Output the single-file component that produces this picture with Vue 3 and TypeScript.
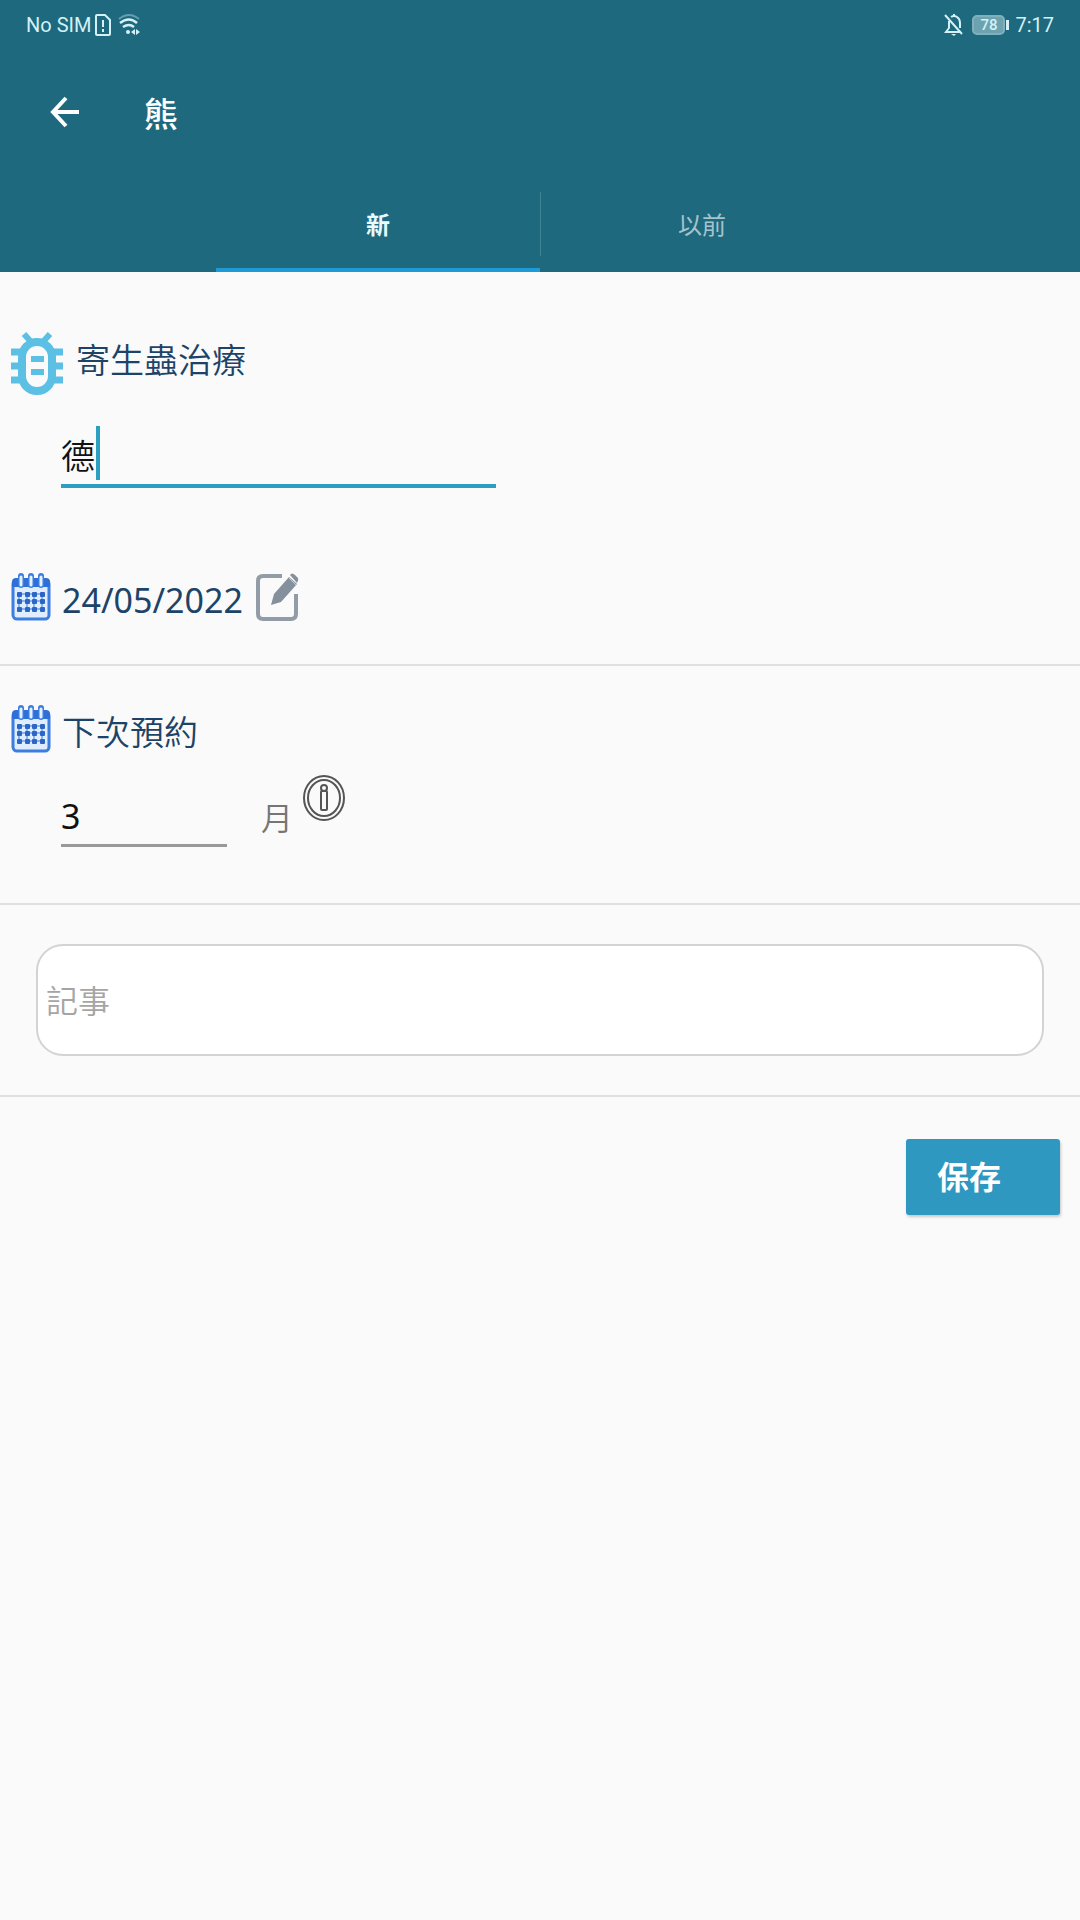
<script setup lang="ts">
import { ref } from 'vue'

const tabs = ['新', '以前']
const activeTab = ref(0)
const treatment = ref('德')
const treatmentDate = '24/05/2022'
const months = ref('3')
const note = ref('')

const gridColumns = [6, 14, 21, 29]
const gridRows = [19, 26, 34]
</script>

<template>
  <div class="screen">
    <header class="header">
      <div class="status">
        <div class="status-group">
          <span>No SIM</span>
          <svg class="sim" width="16" height="22" viewBox="0 0 16 22" fill="none" stroke="currentColor" stroke-width="2">
            <path d="M2 1h8l5 5v14q0 1-1 1H2q-1 0-1-1V2q0-1 1-1z" />
            <path d="M8 6v7M8 15v3" />
          </svg>
          <svg class="wifi" width="24" height="24" viewBox="0 0 24 24" fill="none" stroke="currentColor" stroke-width="2">
            <path d="M1 6Q11-2 21 6" opacity=".4" />
            <path d="M2 10q9-7 17 0M5 14q6-4 11 0" stroke-width="2.5" />
            <circle cx="10" cy="19" r="2" fill="currentColor" stroke="none" />
            <path d="M13 19l4-3v6zM22 19l-4-3v6z" fill="currentColor" stroke="none" />
          </svg>
        </div>
        <div class="status-group">
          <svg class="bell" width="20" height="24" viewBox="0 0 20 24" fill="none" stroke="currentColor" stroke-width="2">
            <path d="M5 8v7l-3 4h15M7 4q3-2 6 0 3 2 3 6v5M10 1v2M1 2l17 19" />
            <path d="M7 21h5l-2 2z" fill="currentColor" stroke="none" />
          </svg>
          <span class="battery"><span class="battery-level">78</span></span>
          <span>7:17</span>
        </div>
      </div>
      <div class="app-bar">
        <button class="back" type="button" aria-label="返回">
          <svg width="30" height="32" viewBox="0 0 30 32" fill="none" stroke="currentColor" stroke-width="4">
            <path d="M29 16H3M16 2L3 16l13 14" />
          </svg>
        </button>
        <h1 class="title">熊</h1>
      </div>
      <nav class="tabs">
        <button
          v-for="(tab, index) in tabs"
          :key="tab"
          type="button"
          class="tab"
          :class="{ active: activeTab === index }"
          @click="activeTab = index"
        >
          {{ tab }}
        </button>
      </nav>
    </header>

    <main>
      <section class="section">
        <div class="heading treatment-heading">
          <svg class="bug" width="52" height="64" viewBox="0 0 52 64" fill="none" stroke="#5bc0e3">
            <path d="M13 2l8 9M39 2l-8 9" stroke-width="6" />
            <path d="M0 20h52M0 34h12M40 34h12M0 48h52" stroke-width="7" />
            <rect x="11" y="10" width="30" height="49" rx="15" fill="#fafafa" stroke-width="8" />
            <path d="M20 27h13M20 40h13" stroke-width="6" />
          </svg>
          <label for="treatment">寄生蟲治療</label>
        </div>
        <div class="field treatment-field">
          <input id="treatment" v-model="treatment" type="text" autocomplete="off" />
          <span class="caret"></span>
        </div>
        <div class="heading">
          <svg class="calendar" width="40" height="48" viewBox="0 0 40 48">
            <rect x="2" y="7" width="36" height="39" rx="4" fill="#dfedff" stroke="#3c7de0" stroke-width="3" />
            <path d="M1 14V9q0-4 4-4h30q4 0 4 4v5z" fill="#2e6fd8" />
            <path d="M10 3v9M20 3v9M30 3v9" stroke="#3c7de0" stroke-width="6" stroke-linecap="round" />
            <path d="M10 4v8M20 4v8M30 4v8" stroke="#e4f2ff" stroke-width="3" stroke-linecap="round" />
            <path d="M6 21h28M6 28h28M6 36h28M8 19v20M16 19v20M23 19v20M31 19v20" stroke="#86b3f2" stroke-width="2" />
            <template v-for="y in gridRows" :key="y">
              <rect v-for="x in gridColumns" :key="x" :x="x" :y="y" width="5" height="5" rx="1" fill="#2c65c4" />
            </template>
          </svg>
          <span class="date">{{ treatmentDate }}</span>
          <button class="icon-button edit" type="button" aria-label="編輯">
            <svg width="44" height="50" viewBox="0 0 44 50" fill="none">
              <path d="M27 4H8Q3 4 3 9v33q0 5 5 5h28q5 0 5-5V22" stroke="#929ca6" stroke-width="4" />
              <path d="M16 33l3-11L34 5l8 7-16 18z" fill="#84909b" />
              <path d="M35 3q2-3 5 0l3 3q1 2-1 5z" fill="#84909b" />
              <path d="M33 5l8 8" stroke="#c5ccd2" stroke-width="1" />
            </svg>
          </button>
        </div>
      </section>

      <section class="section next">
        <div class="heading">
          <svg class="calendar" width="40" height="48" viewBox="0 0 40 48">
            <rect x="2" y="7" width="36" height="39" rx="4" fill="#dfedff" stroke="#3c7de0" stroke-width="3" />
            <path d="M1 14V9q0-4 4-4h30q4 0 4 4v5z" fill="#2e6fd8" />
            <path d="M10 3v9M20 3v9M30 3v9" stroke="#3c7de0" stroke-width="6" stroke-linecap="round" />
            <path d="M10 4v8M20 4v8M30 4v8" stroke="#e4f2ff" stroke-width="3" stroke-linecap="round" />
            <path d="M6 21h28M6 28h28M6 36h28M8 19v20M16 19v20M23 19v20M31 19v20" stroke="#86b3f2" stroke-width="2" />
            <template v-for="y in gridRows" :key="y">
              <rect v-for="x in gridColumns" :key="x" :x="x" :y="y" width="5" height="5" rx="1" fill="#2c65c4" />
            </template>
          </svg>
          <label for="months">下次預約</label>
        </div>
        <div class="months-row">
          <div class="field months-field">
            <input id="months" v-model="months" type="text" inputmode="numeric" />
          </div>
          <span class="unit">月</span>
          <button class="icon-button info" type="button" aria-label="說明">
            <svg width="42" height="48" viewBox="0 0 42 48" fill="none" stroke="#555" stroke-width="2">
              <ellipse cx="21" cy="24" rx="20" ry="22" />
              <ellipse cx="21" cy="24" rx="16" ry="18" />
              <circle cx="21" cy="14" r="3" />
              <rect x="18" y="17" width="6" height="19" rx="1" />
            </svg>
          </button>
        </div>
      </section>

      <section class="section note">
        <textarea v-model="note" rows="1" placeholder="記事" aria-label="記事"></textarea>
      </section>

      <div class="actions">
        <button class="save" type="button">保存</button>
      </div>
    </main>
  </div>
</template>

<style>
body {
  background: #fafafa;
}
</style>

<style scoped>
.screen {
  min-height: 100vh;
  background: #fafafa;
  color: #1d4468;
  font-family: "Noto Sans", "Noto Sans CJK TC", sans-serif;
  font-size: 34px;
  line-height: 48px;
}

button,
input,
textarea {
  box-sizing: border-box;
  margin: 0;
  padding: 0;
  border: 0;
  background: none;
  color: inherit;
  font: inherit;
  outline: 0;
}

svg {
  display: block;
  flex: none;
}

.header {
  background: #1e697d;
  color: #fff;
}

.status {
  display: flex;
  justify-content: space-between;
  padding: 0 26px;
  height: 50px;
  color: #d3f1f7;
  font-family: Roboto, sans-serif;
  font-size: 20px;
}

.status-group {
  display: flex;
  align-items: center;
}

.sim {
  margin-left: 4px;
}

.wifi {
  margin-left: 7px;
}

.battery {
  position: relative;
  margin: 0 10px 0 8px;
  width: 33px;
  height: 20px;
  box-sizing: border-box;
  border: 2px solid #7fb1bd;
  border-radius: 5px;
  background: #6da3b0;
}

.battery::after {
  content: "";
  position: absolute;
  top: 3px;
  right: -6px;
  width: 3px;
  height: 10px;
  background: #d3f1f7;
}

.battery-level {
  display: block;
  font-size: 15px;
  font-weight: 500;
  line-height: 16px;
  text-align: center;
}

.app-bar {
  display: flex;
  align-items: center;
  height: 124px;
}

.back {
  width: 30px;
  margin-left: 50px;
}

.title {
  margin: 0 0 0 64px;
  padding-top: 4px;
  font-size: 34px;
  font-weight: 500;
}

.tabs {
  display: flex;
  width: 60%;
  margin: 0 auto;
}

.tab {
  position: relative;
  flex: 1;
  height: 98px;
  padding-top: 8px;
  border-bottom: 4px solid transparent;
  color: #a5c3cb;
  font-size: 24px;
}

.tab.active {
  border-color: #1e9ad6;
  color: #e6fbff;
  font-weight: 700;
}

.tab + .tab::before {
  content: "";
  position: absolute;
  top: 18px;
  left: 0;
  width: 1px;
  height: 64px;
  background: #3f8294;
}

.section {
  border-bottom: 2px solid #e0e0e0;
  padding: 60px 0 40px;
}

.heading {
  display: flex;
  align-items: center;
  padding-left: 11px;
}

.calendar {
  margin-right: 11px;
}

.heading label,
.date {
  padding-top: 6px;
}

.heading label {
  font-weight: 350;
}

.treatment-heading {
  align-items: flex-start;
}

.bug {
  margin-right: 13px;
}

.treatment-heading label {
  padding-top: 4px;
}

.field {
  position: relative;
  margin-left: 61px;
}

.field input {
  display: block;
  width: 100%;
  color: #111;
}

.treatment-field {
  width: 435px;
  margin-top: 28px;
  margin-bottom: 82px;
}

.treatment-field input {
  height: 64px;
  border-bottom: 4px solid #2b9fc0;
  font-weight: 350;
}

.caret {
  position: absolute;
  top: 2px;
  left: 35px;
  width: 4px;
  height: 54px;
  background: #2b9fc0;
}

.icon-button {
  flex: none;
}

.edit {
  margin-left: 12px;
}

.next {
  padding: 36px 0 56px;
}

.months-row {
  display: flex;
  align-items: flex-start;
  margin-top: 18px;
}

.months-field {
  width: 166px;
}

.months-field input {
  height: 73px;
  padding-top: 14px;
  border-bottom: 3px solid #999;
}

.unit {
  margin-left: 34px;
  padding-top: 20px;
  color: #757575;
  font-size: 32px;
  font-weight: 350;
}

.info {
  margin-left: 10px;
}

.note {
  padding: 39px 36px;
}

.note textarea {
  display: block;
  width: 100%;
  height: 112px;
  padding: 32px 8px;
  border: 2px solid #d3d3d3;
  border-radius: 27px;
  background: #fff;
  color: #333;
  font-size: 32px;
  font-weight: 350;
  line-height: 46px;
  overflow: hidden;
  resize: none;
}

.note textarea::placeholder {
  color: #a5a5a5;
  opacity: 1;
}

.actions {
  display: flex;
  justify-content: flex-end;
  padding: 42px 20px;
}

.save {
  width: 154px;
  height: 76px;
  padding-left: 31px;
  border-radius: 3px;
  background: #2f98c1;
  box-shadow: 1px 2px 3px rgba(0, 0, 0, 0.2);
  color: #fff;
  font-size: 32px;
  font-weight: 700;
  text-align: left;
}
</style>
